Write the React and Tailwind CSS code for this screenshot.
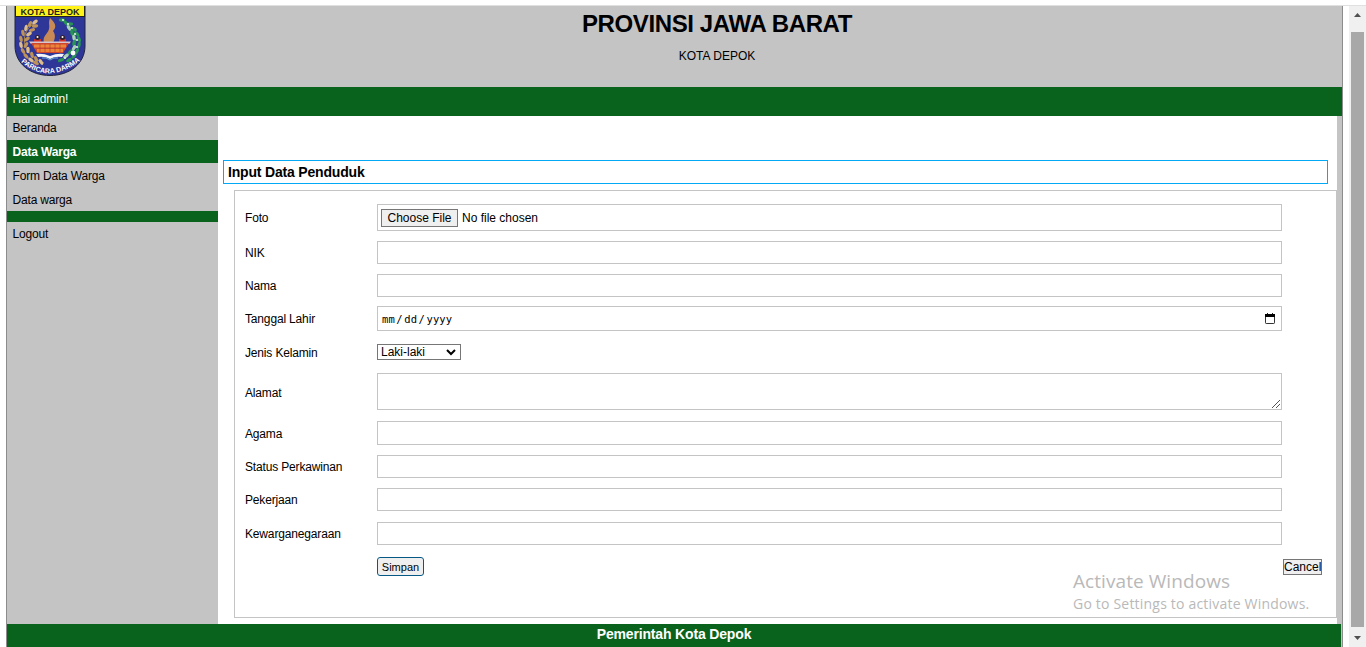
const Label = ({ children }) => <div className="w-[132px] shrink-0 text-[12px] leading-[14px] -tracking-[0.16px]">{children}</div>;

const field = "w-[905px] border border-[#c4c4c4] bg-white";

function TextRow({ label, className }) {
  return (
    <div className={className}>
      <Label>{label}</Label>
      <input type="text" className="h-full w-[905px] border border-[#c4c4c4] bg-white px-1 text-[12px] outline-none" />
    </div>
  );
}

function Leaf({ x, y, r, c }) {
  return <ellipse cx={x} cy={y} rx="3.2" ry="1.7" transform={`rotate(${r} ${x} ${y})`} fill={c} />;
}

const wheat = [
  [21, 16, -40], [16, 18, -70], [21, 20, -10], [12, 22, -80], [18, 24, -20], [9, 27, -100], [15, 28, -30],
  [7, 33, -100], [13, 33, -40], [7, 39, 80], [12, 39, -60], [9, 45, 60], [14, 44, -90], [12, 50, 50],
  [18, 49, 80], [17, 54, 40], [22, 53, 70], [22, 57, 25], [27, 56, 60],
];
const cotton = [
  [48, 14, 0], [52, 17, 50], [56, 18, 0], [55, 22, 60], [60, 23, 30], [58, 27, 80], [63, 28, 50], [60, 32, 80],
  [65, 33, 70], [60, 37, -80], [65, 39, 100], [60, 42, -60], [63, 45, 110], [56, 46, -50], [60, 50, -50], [52, 50, -40], [55, 54, -30],
  [47, 54, -20],
];
const buds = [[49, 14], [54, 18], [58, 22], [61, 28], [63, 34], [63, 41], [59, 47], [51, 52]];

function Logo() {
  return (
    <svg width="72" height="71" viewBox="0 0 72 71" className="ml-[7px] block">
      <path d="M1 -1H71V40C71 58 55 69.500 36 69.500C17 69.500 1 58 1 40Z" fill="#2e3698" stroke="#20243e" />
      <rect x="1.500" y="-.5" width="69" height="11" fill="#fff21a" stroke="#222319" />
      <text x="36" y="8.500" textAnchor="middle" textLength="59" lengthAdjust="spacingAndGlyphs" className="font-['Liberation_Sans'] text-[9px] font-bold" fill="#222">KOTA DEPOK</text>
      <path d="M21 17C6 25 5 47 30 57" fill="none" stroke="#a98443" />
      <path d="M49 15C67 25 67 45 44 56" fill="none" stroke="#208447" />
      {wheat.map(([x, y, r], i) => <Leaf key={i} x={x} y={y} r={r} c={i % 3 ? "#bd935a" : "#dcbd8b"} />)}
      {cotton.map(([x, y, r], i) => <Leaf key={i} x={x} y={y} r={r} c={i % 4 === 3 ? "#a9d3b5" : "#279356"} />)}
      {buds.map(([x, y], i) => <circle key={i} cx={x} cy={y} r="1.100" fill="#e2f0e4" />)}
      <circle cx="59" cy="47" r="2.400" fill="#fff" />
      <path d="M36 12C43 18 42 22 39 25C42 29 41 33 39 37H30C28 30 34 28 35 23C36 19 34 17 36 12Z" fill="#c98a55" />
      <path d="M20 33H27V38H20ZM45 33H52V38H45Z" fill="#cf302a" />
      <circle cx="23.500" cy="31.500" r="2.500" fill="#33202d" />
      <circle cx="48.500" cy="31.500" r="2.500" fill="#33202d" />
      <circle cx="23.500" cy="31" r="1" fill="#fff" />
      <circle cx="48.500" cy="31" r="1" fill="#fff" />
      <path d="M15 35.500H57L55 38H17Z" fill="#d8c4cc" />
      <path d="M17 37H55L49 47H23Z" fill="#cf4630" />
      <path d="M20 40H52M23 44.500H49" stroke="#ee8338" strokeWidth="3" />
      <path d="M26 38V46M31 38V46M36 38V46M41 38V46M46 38V46" stroke="#8e3039" strokeWidth=".5" />
      <path d="M22 48Q29 47 36 50Q43 47 50 48L48 51Q41 50 36 53Q31 50 24 51Z" fill="#f2f5fa" />
      <path d="M28 52Q32 51 36 54Q40 51 44 52" fill="none" stroke="#68add8" />
      <path id="motto" d="M7 56Q34 79 66 55" fill="none" />
      <text className="font-['Liberation_Sans'] text-[7px] font-bold" fill="#fff"><textPath href="#motto" textLength="65" lengthAdjust="spacingAndGlyphs">PARICARA DARMA</textPath></text>
    </svg>
  );
}

export default function App() {
  return (
    <div className="relative flex h-[647px] w-[1366px] flex-col overflow-hidden bg-white font-['Liberation_Sans',Arial,sans-serif] text-[12px] text-black">
      <div className="h-[6px] shrink-0 border-b border-[#e0e0e0]" />
      <div className="flex h-[641px]">
        <div className="ml-[6px] flex w-[1337px] flex-col border-x border-[#8c8c8c] bg-[#c4c4c4]">
          <header className="flex h-[81px]">
            <Logo />
            <div className="flex grow flex-col items-center text-center">
              <h1 className="mt-[4px] ml-[6px] text-[24px] leading-[28px] font-bold -tracking-[0.38px]">PROVINSI JAWA BARAT</h1>
              <p className="mt-[11px] ml-[6px] text-[12px] leading-[14px]">KOTA DEPOK</p>
            </div>
          </header>
          <div className="h-[29px] bg-[#09631d] pt-[5px] pl-[5.500px] leading-[14px] -tracking-[0.16px] text-white">Hai admin!</div>
          <div className="flex h-[508px]">
            <nav className="w-[211px] shrink-0 leading-[24px] -tracking-[0.18px]">
              <div className="h-[24px] pl-[5.500px]">Beranda</div>
              <div className="h-[23px] bg-[#09631d] pl-[5.500px] font-bold text-white">Data Warga</div>
              <div className="h-[24px] pl-[5.500px] leading-[26px]">Form Data Warga</div>
              <div className="h-[24px] pl-[5.500px] leading-[26px]">Data warga</div>
              <div className="h-[11px] bg-[#09631d]" />
              <div className="h-[24px] pl-[5.500px]">Logout</div>
            </nav>
            <main className="flex w-[1119px] flex-col bg-white pt-[44px]">
              <h2 className="ml-[5px] h-[24px] w-[1105px] border border-[#03a9f4] pl-[4px] text-[14px] leading-[23px] font-bold -tracking-[0.18px]">Input Data Penduduk</h2>
              <form className="mt-[6px] ml-[16px] flex h-[428px] w-[1103px] flex-col border border-[#c4c4c4] pl-[10px]">
                <div className="mt-[13px] flex h-[27px] items-center">
                  <Label>Foto</Label>
                  <div className={field + " flex h-[27px] items-center pl-[3px]"}>
                    <button type="button" className="mr-[4px] h-[18px] w-[77px] border border-[#767676] bg-[#efefef] leading-[16px]">Choose File</button>
                    No file chosen
                  </div>
                </div>
                <TextRow label="NIK" className="mt-[10px] flex h-[23px] items-center" />
                <TextRow label="Nama" className="mt-[10px] flex h-[23px] items-center" />
                <div className="mt-[9px] flex h-[25px] items-center">
                  <Label>Tanggal Lahir</Label>
                  <div className={field + " flex h-[25px] items-center justify-between pr-[5px] pl-[4px]"}>
                    <span className="pt-px font-['DejaVu_Sans_Mono',monospace] text-[10.500px] leading-[14px] tracking-[0.1px]">mm<span className="px-[1.500px]">/</span>dd<span className="px-[1.500px]">/</span>yyyy</span>
                    <svg width="12" height="12" viewBox="0 0 12 12"><path d="M3.500 0V2M8.500 0V2" stroke="#222" /><rect x="1.500" y="1.500" width="9" height="9" rx=".7" fill="none" stroke="#333" /><path d="M1 1H11V4H1Z" fill="#000" /></svg>
                  </div>
                </div>
                <div className="mt-[13px] flex h-[16px] items-center">
                  <Label><span className="block pt-px">Jenis Kelamin</span></Label>
                  <div className="flex h-[16px] w-[84px] items-center justify-between border border-[#767676] pr-[4px] pl-[3px] leading-[14px]">
                    Laki-laki
                    <svg width="10" height="7" viewBox="0 0 10 7"><path d="M1 1L5 5L9 1" fill="none" stroke="#000" strokeWidth="2" /></svg>
                  </div>
                </div>
                <div className="mt-[13px] flex h-[37px] items-center">
                  <Label><span className="block pt-[2px]">Alamat</span></Label>
                  <div className={field + " flex h-[37px] items-end justify-end"}>
                    <svg width="10" height="10" viewBox="0 0 10 10"><path d="M1 9L9 1M5 9L9 5" stroke="#555" /></svg>
                  </div>
                </div>
                <TextRow label={<span className="block pt-[2px]">Agama</span>} className="mt-[11px] flex h-[24px] items-center" />
                <TextRow label="Status Perkawinan" className="mt-[10px] flex h-[23px] items-center" />
                <TextRow label="Pekerjaan" className="mt-[10px] flex h-[23px] items-center" />
                <TextRow label="Kewarganegaraan" className="mt-[11px] flex h-[23px] items-center" />
                <div className="mt-[12px] flex h-[19px] items-center pl-[132px]">
                  <button type="button" className="h-[19px] w-[47px] rounded-[3px] border border-[#075985] bg-[#efefef] pt-px text-[11px] leading-[16px]">Simpan</button>
                  <button type="button" className="ml-[859px] h-[16px] w-[39px] border border-[#767676] bg-[#efefef] leading-[14px]">Cancel</button>
                </div>
              </form>
            </main>
          </div>
          <footer className="h-[23px] w-[1334px] bg-[#09631d] text-center text-[14px] leading-[21px] font-bold -tracking-[0.16px] text-white">Pemerintah Kota Depok</footer>
        </div>
        <div className="ml-[6px] flex w-[17px] flex-col items-center bg-[#f0f0f0]">
          <svg width="17" height="26" viewBox="0 0 17 26"><path d="M5 11L8.500 7L12 11Z" fill="#505050" /></svg>
          <div className="h-[595px] w-[13px] bg-[#a8a8a8]" />
          <svg width="17" height="20" viewBox="0 0 17 20"><path d="M5 9H12L8.500 13Z" fill="#505050" /></svg>
        </div>
      </div>
      <div className="pointer-events-none absolute top-[569px] left-[1073px] font-['Open_Sans','Noto_Sans',sans-serif] text-[#b9b9b9]">
        <div className="text-[19px] leading-[25px] tracking-[0.07px]">Activate Windows</div>
        <div className="text-[14px] leading-[20px] tracking-[0.2px]">Go to Settings to activate Windows.</div>
      </div>
    </div>
  );
}
